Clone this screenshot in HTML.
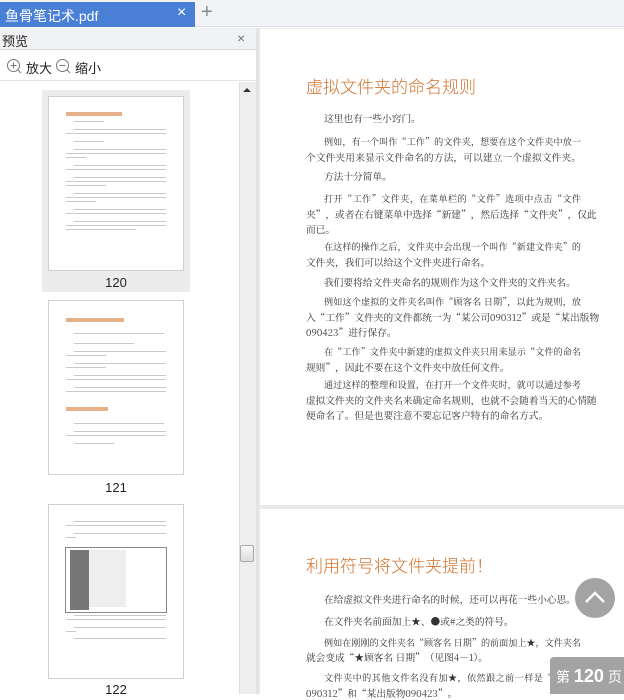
<!DOCTYPE html>
<html><head><meta charset="utf-8"><style>
*{margin:0;padding:0;box-sizing:border-box}
body{width:624px;height:694px;overflow:hidden;position:relative;background:#fff;font-family:"Liberation Sans","Noto Sans CJK SC",sans-serif}
.a{position:absolute}
.l{position:absolute;left:306px;width:275px;font:9.7px/14px "Noto Serif CJK SC",serif;color:#333;white-space:nowrap}
.i{left:324px;width:257px}
.j{text-align:justify;text-align-last:justify}
.i.j{font-size:9.1px}
.tp{position:absolute;background:#fff;border:1px solid #d0d0d0}
.bar{position:absolute;height:1px;background:#c8c8c8}
.num{position:absolute;width:136px;text-align:center;font-size:13px;color:#222}
</style></head><body>
<div class="a" style="left:0;top:0;width:624px;height:27px;background:#f1f3f6;border-bottom:1px solid #dcdfe4"></div>
<div class="a" style="left:0;top:2px;width:195px;height:25px;background:#4a7fd6"></div>
<div class="a" style="left:5px;top:6px;color:#fff;font-size:14px">鱼骨笔记术.pdf</div>
<div class="a" style="left:177px;top:4px;color:#fff;font-size:16px">×</div>
<div class="a" style="left:201px;top:1px;color:#888;font-size:20px;font-weight:300">+</div>
<div class="a" style="left:0;top:28px;width:256px;height:22px;background:#f1f2f4;border-bottom:1px solid #d8d8d8"></div>
<div class="a" style="left:2px;top:31px;font-size:13px;color:#222">预览</div>
<div class="a" style="left:237px;top:30px;font-size:14px;color:#777">×</div>
<div class="a" style="left:0;top:51px;width:256px;height:30px;border-bottom:1px solid #e4e4e4"></div>
<svg class="a" style="left:6px;top:58px" width="16" height="16"><circle cx="7.5" cy="7.5" r="6" fill="none" stroke="#777" stroke-width="1"/><path d="M4.5 7.5h6M7.5 4.5v6M12 12l3 3" stroke="#777"/></svg>
<div class="a" style="left:26px;top:58px;font-size:13px;color:#222">放大</div>
<svg class="a" style="left:55px;top:58px" width="16" height="16"><circle cx="7.5" cy="7.5" r="6" fill="none" stroke="#777"/><path d="M4.5 7.5h6M12 12l3 3" stroke="#777"/></svg>
<div class="a" style="left:75px;top:58px;font-size:13px;color:#222">缩小</div>
<div class="a" style="left:239px;top:82px;width:17px;height:612px;background:#eee;border-left:1px solid #ddd"></div>
<div class="a" style="left:243px;top:88px;width:0;height:0;border-left:4px solid transparent;border-right:4px solid transparent;border-bottom:4px solid #333"></div>
<div class="a" style="left:240px;top:545px;width:14px;height:17px;background:linear-gradient(#f8f8f8,#ddd);border:1px solid #aaa;border-radius:2px"></div>
<div class="a" style="left:256px;top:28px;width:3px;height:666px;background:#e4e4e4"></div>
<div class="a" style="left:42px;top:90px;width:148px;height:202px;background:#ececec"></div>
<div class="tp" style="left:48px;top:96px;width:136px;height:175px"></div>
<div class="a" style="left:66px;top:112px;width:56px;height:4px;background:#e6b088"></div>
<div class="num" style="left:48px;top:275px">120</div>
<div class="tp" style="left:48px;top:300px;width:136px;height:175px"></div>
<div class="a" style="left:66px;top:318px;width:58px;height:4px;background:#e6b088"></div>
<div class="a" style="left:66px;top:407px;width:42px;height:4px;background:#e6b088"></div>
<div class="num" style="left:48px;top:480px">121</div>
<div class="tp" style="left:48px;top:504px;width:136px;height:175px"></div>
<div class="a" style="left:65px;top:547px;width:102px;height:66px;border:1px solid #888;background:#fff"></div>
<div class="a" style="left:70px;top:550px;width:19px;height:60px;background:#777"></div>
<div class="a" style="left:89px;top:550px;width:37px;height:57px;background:#eee"></div>
<div class="num" style="left:48px;top:682px">122</div>
<div class="a" style="left:259px;top:28px;width:365px;height:666px;background:#e9e9e9"></div>
<div class="a" style="left:260px;top:29px;width:364px;height:476px;background:#fff"></div>
<div class="a" style="left:260px;top:509px;width:364px;height:185px;background:#fff"></div>
<div class="a" style="left:306px;top:73px;font:17px 'Noto Sans CJK SC',sans-serif;font-weight:300;color:#d2712b">虚拟文件夹的命名规则</div>
<div class="l i" style="top:111px">这里也有一些小窍门。</div>
<div class="l i j" style="top:135px">例如，有一个叫作“工作”的文件夹，想要在这个文件夹中放一</div>
<div class="l j" style="top:150px">个文件夹用来显示文件命名的方法，可以建立一个虚拟文件夹。</div>
<div class="l i" style="top:169px">方法十分简单。</div>
<div class="l i j" style="top:192px">打开“工作”文件夹，在菜单栏的“文件”选项中点击“文件</div>
<div class="l j" style="top:207px">夹”，或者在右键菜单中选择“新建”，然后选择“文件夹”，仅此</div>
<div class="l" style="top:222px">而已。</div>
<div class="l i j" style="top:240px">在这样的操作之后，文件夹中会出现一个叫作“新建文件夹”的</div>
<div class="l" style="top:255px">文件夹，我们可以给这个文件夹进行命名。</div>
<div class="l i" style="top:275px">我们要将给文件夹命名的规则作为这个文件夹的文件夹名。</div>
<div class="l i j" style="top:295px">例如这个虚拟的文件夹名叫作“顾客名 日期”，以此为规则，放</div>
<div class="l j" style="top:310px">入“工作”文件夹的文件都统一为“某公司090312”或是“某出版物</div>
<div class="l" style="top:325px">090423”进行保存。</div>
<div class="l i j" style="top:345px">在“工作”文件夹中新建的虚拟文件夹只用来显示“文件的命名</div>
<div class="l" style="top:360px">规则”，因此不要在这个文件夹中放任何文件。</div>
<div class="l i j" style="top:378px">通过这样的整理和设置，在打开一个文件夹时，就可以通过参考</div>
<div class="l j" style="top:393px">虚拟文件夹的文件夹名来确定命名规则，也就不会随着当天的心情随</div>
<div class="l" style="top:408px">便命名了。但是也要注意不要忘记客户特有的命名方式。</div>
<div class="a" style="left:306px;top:552px;font:17px 'Noto Sans CJK SC',sans-serif;font-weight:300;color:#d2712b">利用符号将文件夹提前！</div>
<div class="l i" style="top:592px">在给虚拟文件夹进行命名的时候，还可以再花一些小心思。</div>
<div class="l i" style="top:614px">在文件夹名前面加上★、●或#之类的符号。</div>
<div class="l i j" style="top:636px">例如在刚刚的文件夹名“顾客名 日期”的前面加上★，文件夹名</div>
<div class="l" style="top:650px">就会变成“★顾客名 日期”（见图4－1）。</div>
<div class="l i j" style="top:671px">文件夹中的其他文件名没有加★，依然跟之前一样是“某公司</div>
<div class="l" style="top:686px">090312”和“某出版物090423”。</div>
<div class="a" style="left:575px;top:578px;width:40px;height:40px;border-radius:50%;background:#a3a3a3"></div>
<svg class="a" style="left:575px;top:578px" width="40" height="40"><path d="M11 24L20 15L29 24" fill="none" stroke="#fff" stroke-width="2.5"/></svg>
<div class="a" style="left:550px;top:657px;width:74px;height:37px;background:#a3a3a3;border-top-left-radius:4px"></div>
<div class="a" style="left:556px;top:666px;color:#fff;font-size:14px;white-space:nowrap">第 <b style="font-size:18px">120</b> 页</div>
<script>
function bars(top,left,rows){var h='';rows.forEach(function(r){h+='<div class="bar" style="left:'+(left+r[1])+'px;top:'+(top+r[0])+'px;width:'+r[2]+'px"></div>';});document.write(h);}
bars(96,66,[[25,8,30],[33,8,92],[37,0,100],[45,8,30],[53,8,92],[57,0,100],[61,0,20],[69,8,92],[73,0,100],[81,8,92],[85,0,100],[89,0,40],[97,8,92],[101,0,100],[105,0,30],[113,8,92],[117,0,100],[125,8,92],[129,0,100],[133,0,70]]);
bars(300,66,[[33,8,90],[43,8,60],[51,8,92],[55,0,40],[63,8,92],[67,0,40],[75,8,92],[79,0,100],[87,8,92],[91,0,100],[123,8,90],[131,8,92],[135,0,100],[143,8,40]]);
bars(504,66,[[17,8,92],[21,0,100],[29,8,92],[33,0,10],[111,8,92],[115,0,100],[123,8,92],[127,0,10],[134,8,92]]);
</script>
</body></html>
